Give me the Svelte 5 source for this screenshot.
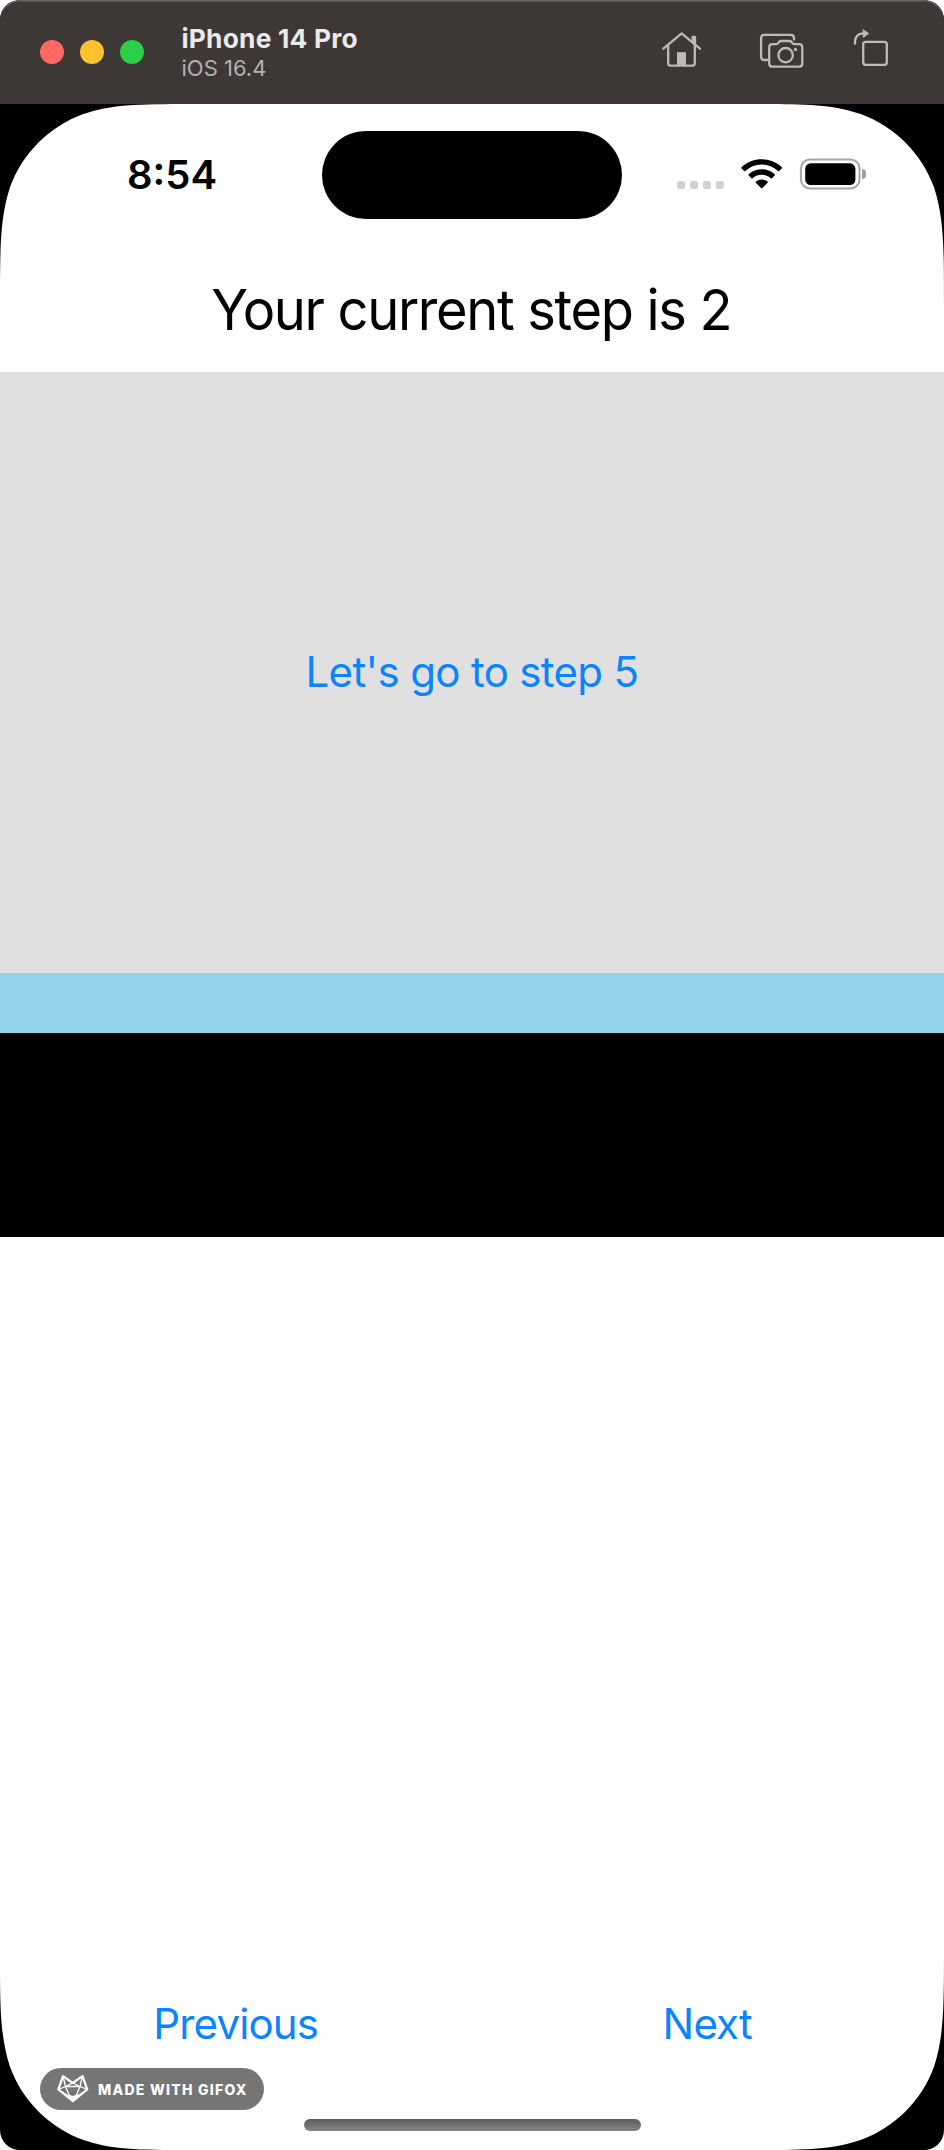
<script>
  let step = $state(2);
  const lights = ['#ff6961', '#ffc130', '#2dce48'];
</script>

<div class="simulator">
  <header class="titlebar">
    <div class="lights">
      {#each lights as color}
        <span style:background={color}></span>
      {/each}
    </div>
    <div class="device">
      <strong>iPhone 14 Pro</strong>
      <small>iOS 16.4</small>
    </div>
    <svg class="tools" width="234" height="50" viewBox="0 0 234 50" fill="none" stroke="#bdbaba" stroke-width="2.3" stroke-linecap="round" stroke-linejoin="round">
      <path d="M3.3 23.7 21.7 8.4 39.9 23.7" />
      <path d="M8.2 20.5V38.2Q8.2 40.6 10.6 40.6H32.4Q34.8 40.6 34.8 38.2V20.5" />
      <path d="M32.7 16V12H35V18" />
      <path d="M17 27.2H26V40.6H17Z" fill="#bdbaba" stroke="none" />
      <path d="M108 35H104.3Q101.1 35 101.1 31.8V13Q101.1 9.8 104.3 9.8H130.8Q134 9.8 134 13V14.5" />
      <path d="M109.2 22.5Q109.2 19.2 112.5 19.2H115.8Q117.3 19.2 118.1 18.2L119 17Q119.8 16 121.4 16H129.2Q130.8 16 131.6 17L132.5 18.2Q133.3 19.2 134.8 19.2H139Q142.3 19.2 142.3 22.5V38.4Q142.3 41.7 139 41.7H112.5Q109.2 41.7 109.2 38.4Z" />
      <circle cx="125.6" cy="30.2" r="7.2" />
      <circle cx="135.5" cy="24.5" r="1.7" fill="#bdbaba" stroke="none" />
      <path d="M195 18.7C194.5 12 198 8.4 203.5 8.4" />
      <path d="M203.4 4.9 208.6 8.5 203.4 12.2Z" fill="#bdbaba" stroke-width="1" />
      <rect x="203.2" y="16.8" width="23.6" height="23" rx="2.5" />
    </svg>
  </header>

  <main class="screen">
    <div class="status">
      <time>8:54</time>
      <div class="island"></div>
      <svg class="signals" width="200" height="40" viewBox="0 0 200 40">
        <g fill="#d1d1d1">
          <rect x="10.2" y="26" width="8" height="8" rx="2.3" />
          <rect x="23.1" y="26" width="8" height="8" rx="2.3" />
          <rect x="36" y="26" width="8" height="8" rx="2.3" />
          <rect x="48.8" y="26" width="8" height="8" rx="2.3" />
        </g>
        <g>
          <path d="M74.6 12.2C85.8 1.6 103.6 1.6 114.8 12.2Q115.4 12.9 114.8 13.5L112.2 16Q111.6 16.5 111 16C101.8 7.4 87.6 7.4 78.4 16Q77.8 16.5 77.2 16L74.6 13.5Q74 12.9 74.6 12.2Z" />
          <path d="M81.7 19.3C89 12.7 100.4 12.7 107.7 19.3Q108.3 20 107.7 20.6L105 23.3Q104.5 23.7 103.9 23.2C98.7 18.6 90.7 18.6 85.5 23.2Q84.9 23.7 84.4 23.3L81.7 20.6Q81.1 20 81.7 19.3Z" />
          <path d="M88.9 26.5C92.2 23.8 97.2 23.8 100.5 26.5Q101.2 27.1 100.6 27.7L95.4 32.9Q94.7 33.5 94 32.9L88.8 27.7Q88.2 27.1 88.9 26.5Z" />
        </g>
        <rect x="133.9" y="4.4" width="58.6" height="29" rx="9" fill="none" stroke="#a6a6a6" stroke-width="2" />
        <rect x="138.2" y="8.3" width="50.2" height="21.8" rx="5.5" />
      </svg>
      <span class="nub"></span>
    </div>

    <h1><span>Your current step is {step}</span></h1>
    <section class="content">
      <button onclick={() => (step = 5)}>Let's go to step 5</button>
    </section>
    <div class="blue"></div>
    <div class="black"></div>
    <nav>
      <button class="nav" onclick={() => (step -= 1)}>Previous</button>
      <button class="nav" onclick={() => (step += 1)}>Next</button>
    </nav>

    <div class="badge">
      <svg width="32" height="30" viewBox="0 0 32 30" fill="none" stroke="#fff" stroke-linejoin="round">
        <path stroke-width="2.2" d="M6 2.2 15.7 9 25.5 2.2 30.3 15.5 15.9 27.2 1.3 15.5Z" />
        <path stroke-width="1.3" d="M6 2.2 8.5 12.5 1.3 15.5 13 23 8.5 12.5 15.7 9 23 12.5 18.6 23 30.3 15.5 23 12.5 25.5 2.2M8.5 12.5H23M6 2.2 1.8 15M25.5 2.2 29.8 15" />
        <path fill="#fff" stroke="none" d="M11.5 20.5 15.8 22 20.2 20.5 18.6 25.3 15.9 27.6 13 25.3Z" />
      </svg>
      <span>MADE WITH GIFOX</span>
    </div>
    <div class="home"></div>
  </main>
</div>

<style>
  :global(body) {
    margin: 0;
    background: #fff;
  }
  .simulator {
    width: 944px;
    height: 2150px;
    display: flex;
    flex-direction: column;
    overflow: hidden;
    border-radius: 20px;
    background: #000;
    font-family: Inter, 'Liberation Sans', sans-serif;
  }
  .titlebar {
    box-sizing: border-box;
    height: 104px;
    flex: none;
    display: flex;
    align-items: center;
    padding: 0 50px 0 40px;
    background: #3d3735;
    border-radius: 20px 20px 0 0;
    box-shadow: inset 0 2px 0 -0.4px #6a6766;
  }
  .lights {
    display: flex;
    gap: 16px;
  }
  .lights span {
    width: 24px;
    height: 24px;
    border-radius: 50%;
  }
  .device {
    margin-left: 37.5px;
    display: flex;
    flex-direction: column;
  }
  strong {
    font-size: 26.3px;
    line-height: 32px;
    font-weight: 700;
    letter-spacing: 0.22px;
    color: #ebeaea;
  }
  small {
    font-size: 22px;
    line-height: 26px;
    color: #b3b0af;
  }
  .tools {
    margin-left: auto;
    margin-bottom: 4px;
  }
  .screen {
    position: relative;
    flex: 1;
    display: flex;
    flex-direction: column;
    background: #fff;
    clip-path: path('M201.8 0H742.2C800.3 0 829.4 0 855.6 8.6L860.6 9.9C894.8 22.3 921.7 49.2 934.1 83.4C944 114.6 944 143.7 944 201.8V1844.2C944 1902.3 944 1931.4 934.1 1962.6C921.7 1996.8 894.8 2023.7 860.6 2036.1L855.6 2037.4C829.4 2046 800.3 2046 742.2 2046H201.8C143.7 2046 114.6 2046 88.4 2037.4L83.4 2036.1C49.2 2023.7 22.3 1996.8 9.9 1962.6C0 1931.4 0 1902.3 0 1844.2V201.8C0 143.7 0 114.6 9.9 83.4C22.3 49.2 49.2 22.3 83.4 9.9L88.4 8.6C114.6 0 143.7 0 201.8 0Z');
  }
  .status {
    height: 142px;
    flex: none;
    display: flex;
    align-items: center;
  }
  time {
    width: 194.5px;
    padding-left: 127px;
    font-size: 40px;
    font-weight: 600;
    line-height: 48px;
  }
  .island {
    width: 300.5px;
    height: 88px;
    border-radius: 44px;
    background: #000;
  }
  .signals {
    margin-left: 45px;
  }
  .nub {
    width: 3.5px;
    height: 10px;
    margin-left: -5px;
    margin-top: -2px;
    border-radius: 0 4px 4px 0;
    background: #a0a0a0;
  }
  h1 {
    margin: 0;
    height: 126px;
    line-height: 128px;
    text-align: center;
    font-size: 56.5px;
    font-weight: 400;
  }
  h1 span {
    display: inline-block;
    letter-spacing: -1.4px;
    transform: translateX(-0.5px) scaleX(0.96);
  }
  .content {
    height: 600.5px;
    flex: none;
    display: flex;
    align-items: center;
    justify-content: center;
    background: #e0e0e0;
  }
  button {
    border: 0;
    padding: 0;
    background: none;
    color: #0a84ff;
    font: 400 42px/52px Inter, 'Liberation Sans', sans-serif;
    letter-spacing: -0.65px;
  }
  .blue {
    height: 60px;
    flex: none;
    background: #91d3ed;
  }
  .black {
    height: 204px;
    flex: none;
    background: #000;
  }
  nav {
    flex: 1;
    display: grid;
    grid-template-columns: 1fr 1fr;
    align-items: end;
    padding: 0 1px 100px 0;
  }
  .nav {
    letter-spacing: -0.85px;
  }
  .badge {
    position: absolute;
    left: 40px;
    bottom: 40px;
    box-sizing: border-box;
    width: 224px;
    height: 42px;
    display: flex;
    align-items: center;
    gap: 9px;
    padding-left: 17px;
    border-radius: 21px;
    background: #757575;
    color: #fff;
    font-size: 14px;
    font-weight: 800;
    letter-spacing: 1.25px;
    white-space: nowrap;
  }
  .home {
    position: absolute;
    left: 304px;
    bottom: 19px;
    width: 336.5px;
    height: 12px;
    border-radius: 6px;
    background: linear-gradient(#5c5c5c, #868686);
  }
</style>
